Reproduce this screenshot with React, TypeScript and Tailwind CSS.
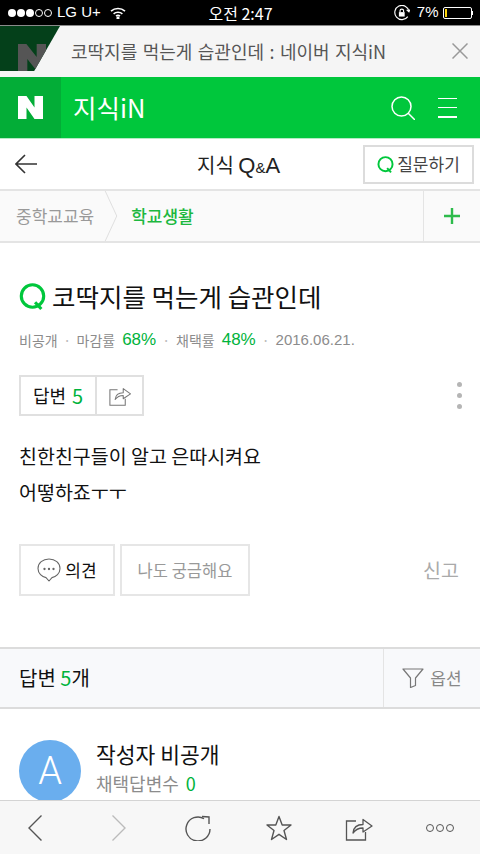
const font = { kr: "font-['Noto_Sans_CJK_KR','Noto_Sans',sans-serif]" };

// Green Q used next to the title and on the ask button
const QMark = ({ className }: { className: string }) => (
  <svg viewBox="0 0 26 26" className={className} fill="none" stroke="#00c73c" strokeWidth="3">
    <circle cx="13" cy="12.5" r="10.8" />
    <path d="M15.5 18.5 L21.5 25" />
  </svg>
);

const ShareIcon = ({ className, color }: { className: string; color: string }) => (
  <svg viewBox="0 0 28 26" className={className} fill="none" stroke={color} strokeWidth="1.3">
    <path d="M11 6H1.5V25H20.5V17" />
    <path d="M8 18C8.5 12.5 12 9.5 18 9.5V4.5L27 11L18 17V13C14 13 10.5 14.5 8 18Z" strokeLinejoin="round" />
  </svg>
);

const App = () => {
  return (
    <div className={`${font.kr} w-[480px] h-[854px] flex flex-col overflow-hidden bg-white`}>
      {/* Status bar */}
      <div className="h-[25px] shrink-0 bg-black text-white flex items-center justify-between pl-[8px] pr-[7px] text-[14px]">
        <div className="flex items-center w-[170px]">
          <div className="flex gap-[1px] items-center">
            <span className="w-[8px] h-[8px] rounded-full bg-white" />
            <span className="w-[8px] h-[8px] rounded-full bg-white" />
            <span className="w-[8px] h-[8px] rounded-full bg-white" />
            <span className="w-[8px] h-[8px] rounded-full border border-white" />
            <span className="w-[8px] h-[8px] rounded-full border border-white" />
          </div>
          <span className="ml-[5px] font-['Liberation_Sans',sans-serif] text-[15px]">LG U+</span>
          <svg viewBox="0 0 16 12" className="ml-[9px] w-[16px] h-[12px]" fill="none" stroke="#fff" strokeWidth="1.6">
            <path d="M1 4.2C5 .6 11 .6 15 4.2" />
            <path d="M3.6 6.8C6 4.8 10 4.8 12.4 6.8" />
            <path d="M6 9.2C7.2 8.2 8.8 8.2 10 9.2" />
            <circle cx="8" cy="11" r=".8" fill="#fff" />
          </svg>
        </div>
        <span className="text-[16px]">오전 2:47</span>
        <div className="flex items-center justify-end w-[170px]">
          <svg viewBox="0 0 18 18" className="w-[16px] h-[16px] mr-[7px]" fill="none" stroke="#fff" strokeWidth="1.3">
            <path d="M15.5 13A8 8 0 1 1 16.8 7" />
            <path d="M14.2 5.5L16.8 7.6L18 5" />
            <rect x="5.5" y="8" width="6.5" height="5" fill="#fff" stroke="none" />
            <path d="M6.8 8V6.6A2 2 0 0 1 10.8 6.6V8" />
          </svg>
          <span className="font-['Liberation_Sans',sans-serif] text-[15px] mr-[4px]">7%</span>
          <div className="w-[29px] h-[12px] border border-white rounded-[2px] p-[1px] flex">
            <span className="w-[2px] h-full bg-[#ffd60a]" />
          </div>
          <span className="w-[1.5px] h-[4px] bg-white" />
        </div>
      </div>

      {/* App banner */}
      <div className="h-[52px] shrink-0 bg-[#f5f5f5] flex items-center relative border-t border-[#8a8a8a]">
        <div className="absolute left-0 top-0 w-[60px] h-[45px] bg-[#04401a] [clip-path:polygon(0_0,100%_0,57%_100%,0_100%)] overflow-hidden">
          <svg viewBox="0 0 30 30" className="absolute left-[18px] top-[18px] w-[28px] h-[28px]" fill="#555">
            <path d="M0 0H9L20 14V0H30V30H21L10 16V30H0Z" />
          </svg>
        </div>
        <span className="ml-[71px] text-[18px] [word-spacing:1.4px] text-[#555] whitespace-nowrap">코딱지를 먹는게 습관인데 : 네이버 지식iN</span>
        <svg viewBox="0 0 16 16" className="absolute right-[12px] top-[17px] w-[16px] h-[16px]" stroke="#999" strokeWidth="1.5">
          <path d="M0.5 0.5L15.5 15.5M15.5 0.5L0.5 15.5" />
        </svg>
      </div>

      {/* Green header */}
      <div className="h-[61px] shrink-0 bg-[#00c73c] flex items-center text-white border-b border-[#b4ecc4] box-content">
        <div className="w-[61px] h-full bg-[#03ad37] flex items-center justify-center">
          <svg viewBox="0 0 25 23" className="w-[25px] h-[23px]" fill="#fff">
            <path d="M0 0H8.5L16.5 11.5V0H25V23H16.5L8.5 11.5V23H0Z" />
          </svg>
        </div>
        <span className="ml-[12px] text-[25.5px]">지식iN</span>
        <svg viewBox="0 0 24 24" className="ml-auto w-[24px] h-[24px]" fill="none" stroke="#fff" strokeWidth="1.5">
          <circle cx="10.5" cy="10.5" r="9.5" />
          <path d="M17 17L24 24" />
        </svg>
        <div className="ml-[23px] mr-[23px] w-[19px] h-[20px] flex flex-col justify-between">
          <span className="h-[1.5px] bg-white" />
          <span className="h-[1.5px] bg-white" />
          <span className="h-[1.5px] bg-white" />
        </div>
      </div>

      {/* Q&A nav */}
      <div className="h-[52px] shrink-0 flex items-center justify-between relative pl-[15px] pr-[6px] border-b-2 border-[#e4e4e4]">
        <svg viewBox="0 0 22 20" className="w-[22px] h-[20px]" fill="none" stroke="#333" strokeWidth="1.6">
          <path d="M22 10H1M10 1L1 10L10 19" />
        </svg>
        <span className="absolute left-[197px] top-[10px] text-[20px] text-[#222] whitespace-nowrap">
          지식 <span className="font-['Liberation_Sans',sans-serif] text-[22px]">Q</span>
          <span className="font-['Liberation_Sans',sans-serif] text-[15px]">&amp;</span>
          <span className="font-['Liberation_Sans',sans-serif] text-[22px]">A</span>
        </span>
        <div className="w-[111px] h-[39px] border-2 border-[#dcdcdc] flex items-center justify-center gap-[3px]">
          <QMark className="w-[17px] h-[17px]" />
          <span className="text-[17px] text-[#444]">질문하기</span>
        </div>
      </div>

      {/* Breadcrumb */}
      <div className="h-[52px] shrink-0 bg-[#fafafa] flex items-center relative border-b-2 border-[#e4e4e4]">
        <span className="ml-[16px] text-[17px] text-[#999]">중학교교육</span>
        <svg viewBox="0 0 14 52" className="absolute left-[104px] top-0 w-[14px] h-[50px]" fill="none" stroke="#dedede" strokeWidth="1">
          <path d="M1 0L13 26L1 52" />
        </svg>
        <span className="ml-[37px] text-[17px] font-medium text-[#1cb83f]">학교생활</span>
        <div className="ml-auto w-[57px] h-full border-l border-[#e4e4e4] flex items-center justify-center">
          <svg viewBox="0 0 16 16" className="w-[16px] h-[16px]" stroke="#2dbb4b" strokeWidth="2.4">
            <path d="M8 0V16M0 8H16" />
          </svg>
        </div>
      </div>

      {/* Scrolling content, clipped by the toolbar below */}
      <div className="flex-1 min-h-0 overflow-hidden">
        <div className="px-[19px]">
          <div className="mt-[35px] flex items-center h-[36px]">
            <QMark className="w-[27px] h-[27px] shrink-0" />
            <h1 className="ml-[6px] text-[25.5px] text-[#111] whitespace-nowrap">코딱지를 먹는게 습관인데</h1>
          </div>
          <div className="mt-[14px] flex items-center h-[24px] text-[14px] text-[#8c8c8c] whitespace-nowrap">
            <span>비공개</span>
            <span className="mx-[5.5px] text-[#bbb]">·</span>
            <span>마감률</span>
            <span className="ml-[7px] text-[#00b33c] text-[17px] font-['Liberation_Sans',sans-serif]">68%</span>
            <span className="mx-[6px] text-[#bbb]">·</span>
            <span>채택률</span>
            <span className="ml-[7px] text-[#00b33c] text-[17px] font-['Liberation_Sans',sans-serif]">48%</span>
            <span className="mx-[6px] text-[#bbb]">·</span>
            <span className="font-['Liberation_Sans',sans-serif] text-[15px]">2016.06.21.</span>
          </div>
          <div className="mt-[23px] flex items-center justify-between">
            <div className="flex h-[41px] w-[125px] border-2 border-[#e0e0e0]">
              <div className="w-[76px] flex items-center justify-center border-r-2 border-[#e0e0e0] text-[18px] text-[#111]">
                답변<span className="ml-[6px] text-[#00b33c] text-[20px]">5</span>
              </div>
              <div className="flex-1 flex items-center justify-center">
                <ShareIcon className="w-[24px] h-[21px]" color="#777" />
              </div>
            </div>
            <div className="mr-[-1px] flex flex-col gap-[6px]">
              <span className="w-[5px] h-[5px] rounded-full bg-[#b5b5b5]" />
              <span className="w-[5px] h-[5px] rounded-full bg-[#b5b5b5]" />
              <span className="w-[5px] h-[5px] rounded-full bg-[#b5b5b5]" />
            </div>
          </div>
          <p className="mt-[22px] text-[19.5px] leading-[36px] text-[#111]">
            친한친구들이 알고 은따시켜요
            <br />
            어떻하죠ㅜㅜ
          </p>
          <div className="mt-[34px] flex items-center">
            <div className="w-[96px] h-[52px] border-2 border-[#e6e6e6] flex items-center justify-center gap-[4px]">
              <svg viewBox="0 0 24 24" className="w-[24px] h-[24px]" fill="none" stroke="#666" strokeWidth="1.1">
                <path d="M12 1C5.8 1 1 5 1 10.5C1 15.5 5 19 9 19.6L12 23L15 19.6C19 19 23 15.5 23 10.5C23 5 18.2 1 12 1Z" strokeLinejoin="round" />
                <circle cx="7.5" cy="11" r=".6" fill="#666" />
                <circle cx="12" cy="11" r=".6" fill="#666" />
                <circle cx="16.5" cy="11" r=".6" fill="#666" />
              </svg>
              <span className="text-[17px] text-[#111]">의견</span>
            </div>
            <div className="ml-[5px] w-[130px] h-[52px] border-2 border-[#e6e6e6] flex items-center justify-center text-[16.5px] text-[#999]">
              나도 궁금해요
            </div>
            <span className="ml-auto mr-[2px] text-[19.5px] text-[#aaa]">신고</span>
          </div>
        </div>

        {/* Answers header */}
        <div className="mt-[51px] h-[62px] bg-[#f8f9fb] border-y-2 border-[#dcdcdc] flex items-center">
          <span className="ml-[19px] text-[20px] text-[#111]">
            답변 <span className="text-[#00b33c]">5</span>개
          </span>
          <div className="ml-auto w-[97px] h-full border-l border-[#e4e4e4] flex items-center justify-center gap-[6px]">
            <svg viewBox="0 0 22 20" className="w-[22px] h-[20px]" fill="none" stroke="#777" strokeWidth="1.2">
              <path d="M1 1H21L13.5 10V17.5L8.5 19.5V10Z" strokeLinejoin="round" />
            </svg>
            <span className="text-[17px] text-[#888]">옵션</span>
          </div>
        </div>

        {/* Author */}
        <div className="mt-[31px] px-[19px] flex">
          <div className="w-[62px] h-[62px] rounded-full bg-[#6aaeee] flex items-center justify-center text-white text-[38px] font-['Roboto',sans-serif] font-light shrink-0">
            A
          </div>
          <div className="ml-[15px] -mt-[1px]">
            <div className="text-[21.5px] leading-[30px] text-[#111]">작성자 비공개</div>
            <div className="text-[18px] leading-[28px] text-[#8c8c8c]">
              채택답변수 <span className="ml-[3px] text-[#00b33c] text-[18px]">0</span>
            </div>
          </div>
        </div>
      </div>

      {/* Browser toolbar */}
      <div className="h-[54px] shrink-0 bg-[#f7f7f7] border-t border-[#d4d4d4] flex items-center pl-[28px]">
        <svg viewBox="0 0 14 26" className="w-[14px] h-[26px]" fill="none" stroke="#555" strokeWidth="1.4">
          <path d="M13.5 .5L1 13L13.5 25.5" />
        </svg>
        <svg viewBox="0 0 14 26" className="ml-[70px] w-[14px] h-[26px]" fill="none" stroke="#bbb" strokeWidth="1.4">
          <path d="M.5 .5L13 13L.5 25.5" />
        </svg>
        <svg viewBox="0 0 26 26" className="ml-[59px] w-[26px] h-[26px]" fill="none" stroke="#555" strokeWidth="1.4">
          <path d="M25 14A12 12 0 1 1 19 3.6" />
          <path d="M17 1.5L24 2V9" />
        </svg>
        <svg viewBox="0 0 26 26" className="ml-[55px] w-[26px] h-[26px]" fill="none" stroke="#555" strokeWidth="1.4">
          <path d="M13 1.5L16.2 10H25L18 15.5L20.5 24.5L13 19.3L5.5 24.5L8 15.5L1 10H9.8Z" strokeLinejoin="round" />
        </svg>
        <ShareIcon className="ml-[53px] w-[28px] h-[26px]" color="#555" />
        <div className="ml-[53px] flex gap-[2px]">
          <span className="w-[8px] h-[8px] rounded-full border-[1.5px] border-[#555]" />
          <span className="w-[8px] h-[8px] rounded-full border-[1.5px] border-[#555]" />
          <span className="w-[8px] h-[8px] rounded-full border-[1.5px] border-[#555]" />
        </div>
      </div>
    </div>
  );
};

export default App;
